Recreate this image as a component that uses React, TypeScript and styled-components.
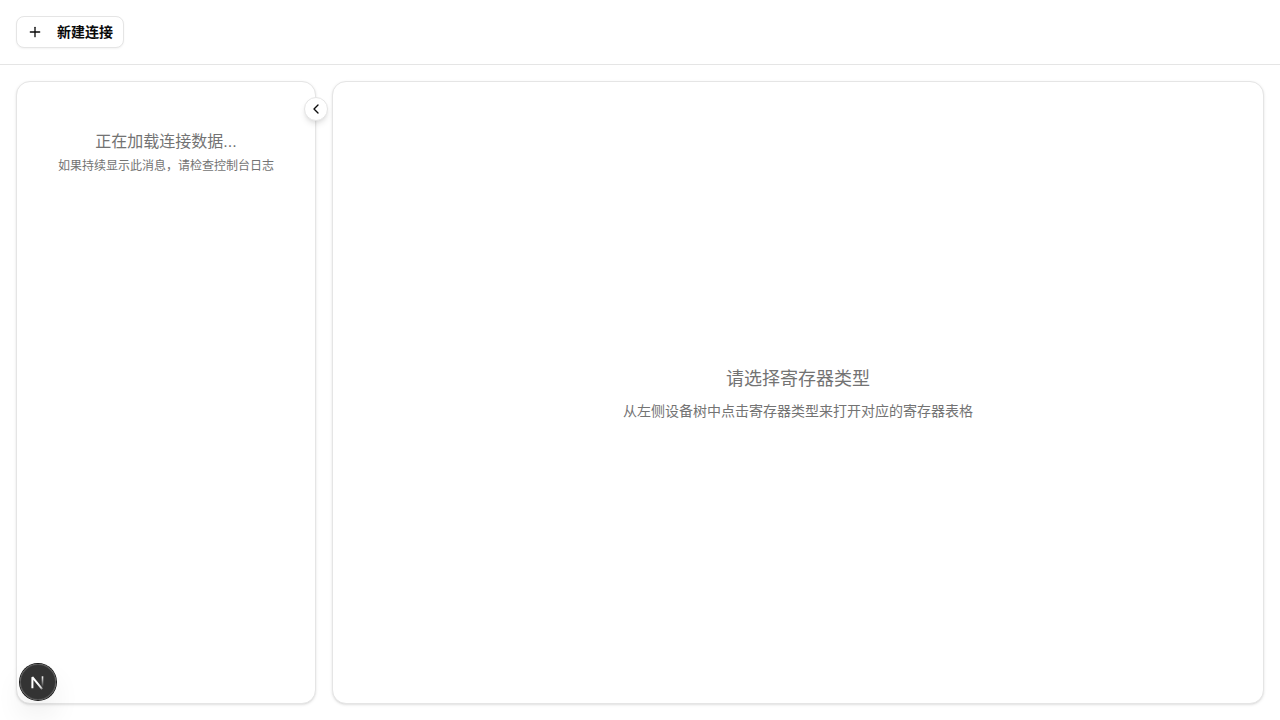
import React from "react";
import styled, { createGlobalStyle } from "styled-components";
import { ChevronLeft, Plus } from "lucide-react";

const GlobalStyle = createGlobalStyle`
  *, *::before, *::after { box-sizing: border-box; }
  body {
    margin: 0;
    background: #fff;
    color: #0a0a0a;
    font-family: "Liberation Sans", "Noto Sans CJK SC", sans-serif;
    font-size: 16px;
    line-height: 24px;
  }
  p, h2 { margin: 0; font-weight: 400; }
  button { font: inherit; color: inherit; cursor: pointer; }
`;

const Page = styled.div`
  display: flex;
  flex-direction: column;
  min-height: 100vh;
`;

const Toolbar = styled.header`
  display: flex;
  align-items: center;
  padding: 16px;
  border-bottom: 1px solid #e5e5e5;
`;

const ToolbarButton = styled.button`
  display: inline-flex;
  align-items: center;
  gap: 14px;
  height: 32px;
  padding: 0 10px;
  border: 1px solid #e5e5e5;
  border-radius: 8px;
  background: #fff;
  box-shadow: 0 1px 2px rgba(0, 0, 0, 0.05);
  && {
    font-size: 14px;
    font-weight: 600;
    line-height: 20px;
  }
`;

const Workspace = styled.main`
  flex: 1;
  display: flex;
  gap: 16px;
  padding: 16px;
`;

const Panel = styled.section`
  position: relative;
  display: flex;
  flex-direction: column;
  border: 1px solid #e5e5e5;
  border-radius: 14px;
  background: #fff;
  color: #737373;
  text-align: center;
  box-shadow: 0 1px 3px rgba(0, 0, 0, 0.1), 0 1px 2px -1px rgba(0, 0, 0, 0.1);
`;

const DeviceTree = styled(Panel)`
  flex: 0 0 300px;
  padding: 48px 16px;
`;

const RegisterView = styled(Panel)`
  flex: 1;
  justify-content: center;
  padding: 16px;
`;

const LoadingText = styled.p`
  font-size: 16px;
  line-height: 24px;
`;

const LoadingHint = styled.p`
  margin-top: 4px;
  font-size: 12px;
  line-height: 16px;
`;

const EmptyTitle = styled.h2`
  font-size: 18px;
  line-height: 28px;
`;

const EmptyHint = styled.p`
  margin-top: 8px;
  font-size: 14px;
  line-height: 20px;
`;

const CollapseButton = styled.button`
  position: absolute;
  top: 15px;
  right: -13px;
  display: flex;
  align-items: center;
  justify-content: center;
  width: 24px;
  height: 24px;
  padding: 0;
  border: 1px solid #e5e5e5;
  border-radius: 50%;
  background: #fff;
  && { color: #0a0a0a; }
  box-shadow: 0 4px 6px -1px rgba(0, 0, 0, 0.1), 0 2px 4px -2px rgba(0, 0, 0, 0.1);

  svg { flex: none; }
`;

const DevToolsButton = styled.button`
  position: fixed;
  left: 20px;
  bottom: 20px;
  display: flex;
  align-items: center;
  justify-content: center;
  width: 36px;
  height: 36px;
  padding: 0;
  border: 0;
  border-radius: 50%;
  background: rgba(0, 0, 0, 0.8);
  box-shadow: 0 0 0 1px #171717, inset 0 0 0 1px rgba(255, 255, 255, 0.14),
    0 16px 32px -8px rgba(0, 0, 0, 0.24);

  svg { flex: none; }
`;

function NextLogo() {
  return (
    <svg width="40" height="40" viewBox="0 0 40 40" fill="none" aria-hidden="true">
      <defs>
        <linearGradient id="diagonal" x1="20" y1="21" x2="25.5" y2="27.8" gradientUnits="userSpaceOnUse">
          <stop stopColor="#fff" />
          <stop offset="0.6" stopColor="#fff" stopOpacity="0.8" />
          <stop offset="1" stopColor="#fff" stopOpacity="0.1" />
        </linearGradient>
        <linearGradient id="stem" x1="24.5" y1="14" x2="24.5" y2="25" gradientUnits="userSpaceOnUse">
          <stop stopColor="#fff" />
          <stop offset="1" stopColor="#fff" stopOpacity="0" />
        </linearGradient>
      </defs>
      <path d="M14.4 26.2V15.2L24.2 27.2" stroke="url(#diagonal)" strokeWidth="2" strokeLinejoin="bevel" />
      <path d="M24.5 14.3V26" stroke="url(#stem)" strokeWidth="1.6" />
    </svg>
  );
}

export default function App() {
  return (
    <Page>
      <GlobalStyle />
      <Toolbar>
        <ToolbarButton type="button">
          <Plus size={16} />
          新建连接
        </ToolbarButton>
      </Toolbar>
      <Workspace>
        <DeviceTree>
          <LoadingText>正在加载连接数据...</LoadingText>
          <LoadingHint>如果持续显示此消息，请检查控制台日志</LoadingHint>
          <CollapseButton type="button" aria-label="折叠">
            <ChevronLeft size={16} />
          </CollapseButton>
        </DeviceTree>
        <RegisterView>
          <EmptyTitle>请选择寄存器类型</EmptyTitle>
          <EmptyHint>从左侧设备树中点击寄存器类型来打开对应的寄存器表格</EmptyHint>
        </RegisterView>
      </Workspace>
      <DevToolsButton type="button" aria-label="Next.js">
        <NextLogo />
      </DevToolsButton>
    </Page>
  );
}
